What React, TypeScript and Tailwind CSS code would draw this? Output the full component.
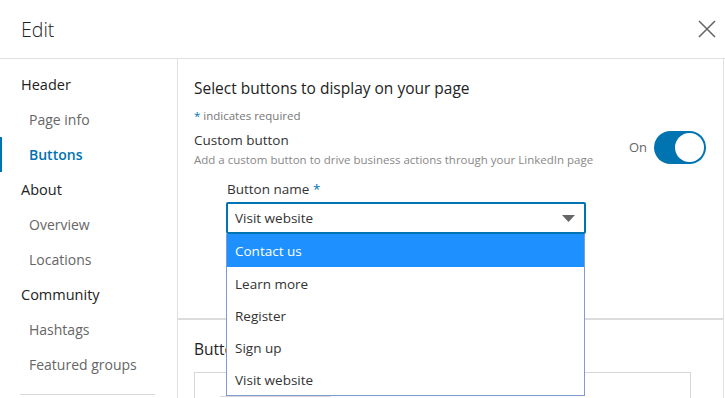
import { useState } from "react";

const NAV = [
  { label: "Header", head: true },
  { label: "Page info" },
  { label: "Buttons", active: true },
  { label: "About", head: true },
  { label: "Overview" },
  { label: "Locations" },
  { label: "Community", head: true },
  { label: "Hashtags" },
  { label: "Featured groups" },
];

const OPTIONS = ["Contact us", "Learn more", "Register", "Sign up", "Visit website"];

export default function App() {
  const [value] = useState("Visit website");
  const [on] = useState(true);

  return (
    <div
      className="w-[725px] h-[398px] overflow-hidden bg-white text-[#333333] flex flex-col"
      style={{ fontFamily: '"Open Sans", "Noto Sans", sans-serif' }}
    >
      {/* top bar */}
      <div className="h-[59px] shrink-0 border-b border-[#e0e0e0] flex items-center justify-between pl-[21px] pr-[8px]">
        <h1 className="text-[19.5px] font-light text-[#222] pt-[1px]">Edit</h1>
        <button className="w-[18px] h-[18px] mr-[1px] mb-[1px]">
          <svg viewBox="0 0 18 18" className="w-[18px] h-[18px]" stroke="#666" strokeWidth="1.6" fill="none">
            <path d="M1 1 L17 17 M17 1 L1 17" />
          </svg>
        </button>
      </div>

      <div className="flex flex-1 min-h-0">
        {/* sidebar */}
        <nav className="w-[178px] shrink-0 border-r border-[#e0e0e0] pt-[8px]">
          {NAV.map((n) => (
            <div
              key={n.label}
              className={
                "h-[35px] flex items-center border-l-2 " +
                (n.active ? "border-[#0073b1]" : "border-transparent") +
                (n.head ? " pl-[19px] text-[14.5px] text-[#222]" : " pl-[27px] text-[14px]") +
                (n.active ? " text-[#0073b1] font-semibold" : n.head ? "" : " text-[#666]")
              }
            >
              {n.label}
            </div>
          ))}
          <div className="mt-[12px] ml-[20px] w-[135px] border-t border-[#d9d9d9]" />
        </nav>

        {/* main */}
        <main className="flex-1 border-r border-[#e0e0e0] mr-[1px]">
          <section className="h-[261px] border-b-2 border-[#dcdcdc] pl-[16px] pr-[17px] pt-[18px]">
            <h2 className="text-[15.5px] text-[#222] leading-[22px]">Select buttons to display on your page</h2>
            <p className="mt-[9px] text-[11.5px] text-[#777] leading-[16px]">
              <span className="text-[#0073b1]">*</span> indicates required
            </p>
            <div className="flex items-start justify-between mt-[7px]">
              <div>
                <div className="text-[13.5px] text-[#333] leading-[19px]">Custom button</div>
                <div className="text-[11.5px] text-[#888] leading-[18px] mt-[1px]">
                  Add a custom button to drive business actions through your LinkedIn page
                </div>
              </div>
              <div className="flex items-center gap-[7px]">
                <span className="text-[13px] text-[#666]">On</span>
                <div
                  className={
                    "w-[52px] h-[33px] rounded-full p-[2px] flex " +
                    (on ? "bg-[#0073b1] justify-end" : "bg-[#999] justify-start")
                  }
                >
                  <div className="w-[29px] h-[29px] rounded-full bg-white" />
                </div>
              </div>
            </div>

            <div className="ml-[32px] mt-[11px] w-[360px]">
              <div className="text-[13.5px] text-[#333] leading-[18px] pl-[1px]">
                Button name <span className="text-[#0073b1]">*</span>
              </div>
              <div className="relative mt-[4px]">
                <div className="h-[32px] border-2 border-[#0073b1] rounded-[2px] flex items-center justify-between pl-[7px] pr-[9px] pt-[1px] text-[13.5px] text-[#333]">
                  <span>{value}</span>
                  <svg viewBox="0 0 13 7" className="w-[13px] h-[7px]" fill="#666">
                    <path d="M0 0 H13 L6.5 7 Z" />
                  </svg>
                </div>
                <ul className="absolute left-0 top-full w-[359px] bg-white border border-[#7f9bd0] border-t-0 z-10">
                  {OPTIONS.map((o, i) => (
                    <li
                      key={o}
                      className={
                        "h-[32px] flex items-center pl-[8px] pt-[2px] text-[13.5px] " +
                        (i === 0 ? "bg-[#1e90ff] text-white h-[33px]" : "text-[#333]")
                      }
                    >
                      {o}
                    </li>
                  ))}
                </ul>
              </div>
            </div>
          </section>

          <section className="pl-[16px] pr-[32px] pt-[18px]">
            <h2 className="text-[15.5px] text-[#222] leading-[22px]">Button preview</h2>
            <div className="mt-[12px] h-[40px] border border-[#d6d6d6] pl-[25px] pt-[23px]">
              <div className="w-[111px] h-[20px] border-t border-[#d9d9d9]" />
            </div>
          </section>
        </main>
      </div>
    </div>
  );
}
